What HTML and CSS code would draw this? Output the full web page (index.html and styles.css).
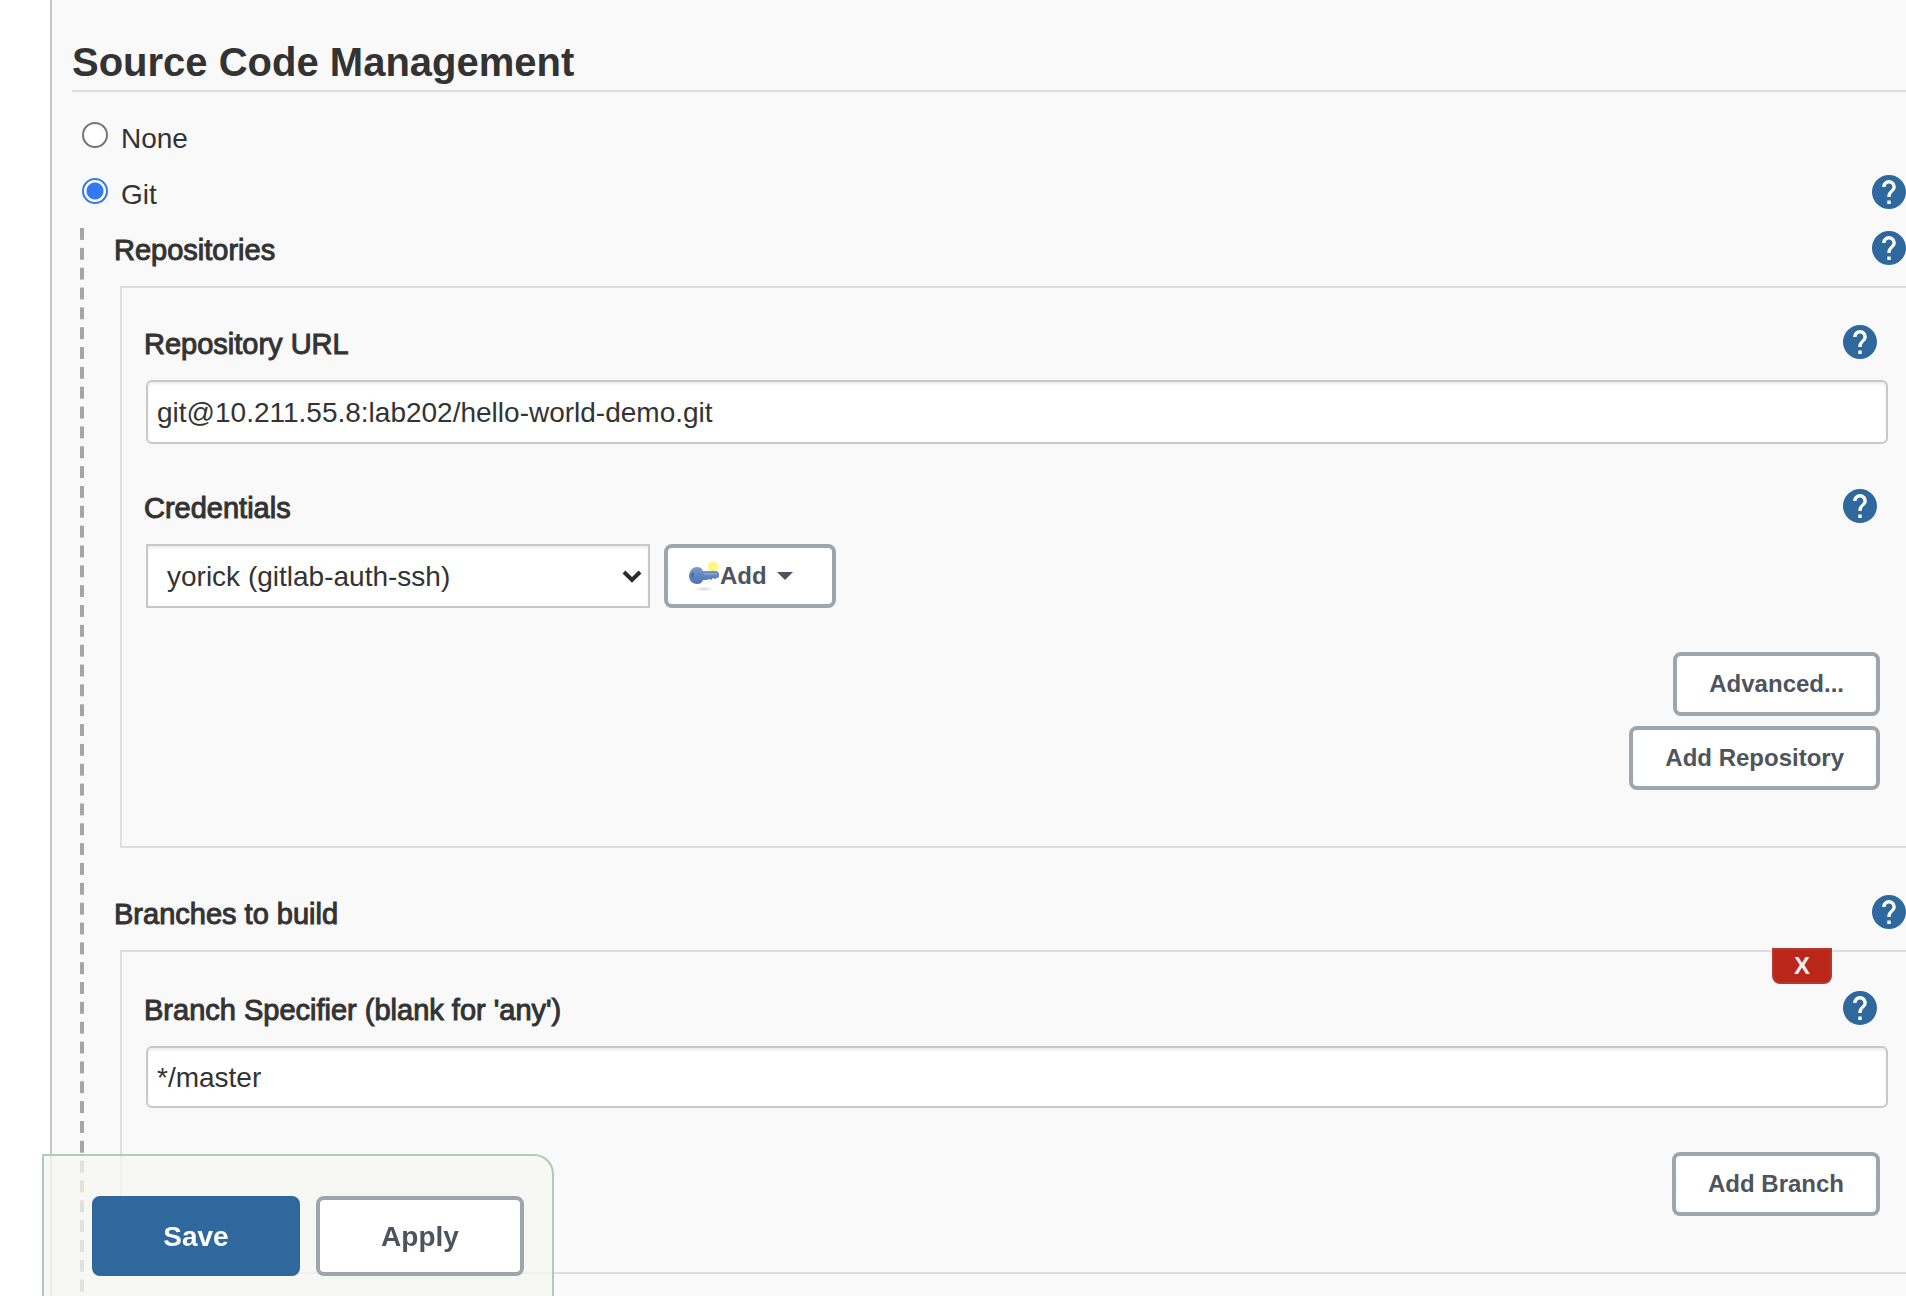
FILE: index.html
```html
<!DOCTYPE html>
<html lang="en">
<head>
<meta charset="utf-8">
<meta name="viewport" content="width=device-width, initial-scale=1">
<title>Source Code Management</title>
<link rel="stylesheet" href="styles.css">
</head>
<body>
<svg class="sprite" aria-hidden="true">
  <symbol id="help" viewBox="2 2 20 20">
    <circle cx="12" cy="12" r="9" fill="#fff"/>
    <path fill="#2e689d" d="M12 2C6.48 2 2 6.48 2 12s4.48 10 10 10 10-4.48 10-10S17.52 2 12 2zm1 17h-2v-2h2v2zm2.07-7.75l-.9.92C13.45 12.9 13 13.5 13 15h-2v-.5c0-1.1.45-2.1 1.17-2.83l1.24-1.26c.37-.36.59-.86.59-1.41 0-1.1-.9-2-2-2s-2 .9-2 2H8c0-2.21 1.79-4 4-4s4 1.79 4 4c0 .88-.36 1.68-.93 2.25z"/>
  </symbol>
</svg>
<form class="panel">
  <h1 class="title">Source Code Management</h1>

  <div class="row choice">
    <input class="radio" type="radio" name="scm" id="scm-none">
    <label class="choice-label" for="scm-none">None</label>
  </div>
  <div class="row choice">
    <input class="radio" type="radio" name="scm" id="scm-git" checked>
    <label class="choice-label" for="scm-git">Git</label>
    <a class="help" href="#help-git" aria-label="Help for Git"><svg><use href="#help"/></svg></a>
  </div>

  <div class="group">
    <div class="row">
      <h2 class="label">Repositories</h2>
      <a class="help" href="#help-repositories" aria-label="Help for Repositories"><svg><use href="#help"/></svg></a>
    </div>
    <section class="box">
      <div class="row">
        <label class="label" for="url">Repository URL</label>
        <a class="help" href="#help-url" aria-label="Help for Repository URL"><svg><use href="#help"/></svg></a>
      </div>
      <input class="text" type="text" id="url" value="git@10.211.55.8:lab202/hello-world-demo.git">

      <div class="row next">
        <label class="label" for="credentials">Credentials</label>
        <a class="help" href="#help-credentials" aria-label="Help for Credentials"><svg><use href="#help"/></svg></a>
      </div>
      <div class="credentials">
        <div class="select-wrap">
          <select class="select" id="credentials"><option>yorick (gitlab-auth-ssh)</option></select>
          <svg class="chevron" viewBox="0 0 20 14"><path d="M2 2l8 8 8-8" fill="none" stroke="#2b2b2b" stroke-width="4"/></svg>
        </div>
        <button class="button add" type="button">
          <svg class="key" viewBox="0 0 32 32">
            <defs>
              <radialGradient id="glow"><stop offset="0" stop-color="#fffbb0"/><stop offset=".45" stop-color="#fff26a"/><stop offset="1" stop-color="#fff26a" stop-opacity="0"/></radialGradient>
              <radialGradient id="shade"><stop offset="0" stop-color="#d0d0d0"/><stop offset="1" stop-color="#fff" stop-opacity="0"/></radialGradient>
              <linearGradient id="metal" x2="0" y2="1"><stop offset="0" stop-color="#7a9bd0"/><stop offset="1" stop-color="#4a72b3"/></linearGradient>
            </defs>
            <ellipse cx="16" cy="29" rx="14" ry="3" fill="url(#shade)"/>
            <circle cx="25" cy="7" r="7" fill="url(#glow)"/>
            <path fill="url(#metal)" d="M9 7c3 0 5 1 6 4h14l2 2v4l-4 2-2-1-2 2-2-1-2 1h-4c-1 3-3 4-6 4-5 0-8-4-8-8s3-9 8-9z"/>
            <path d="M5 12c1 1 1 4 0 6-2-1-2-5 0-6z" fill="#44639a"/>
            <path d="M16 14h13" stroke="#9ab2da" stroke-width="1"/>
          </svg>
          <span>Add</span>
          <svg class="caret" viewBox="0 0 16 8"><path d="M0 0h16L8 8z" fill="#4d545d"/></svg>
        </button>
      </div>
      <div class="actions">
        <button class="button" type="button">Advanced...</button>
        <button class="button" type="button">Add Repository</button>
      </div>
    </section>

    <div class="row section-next">
      <h2 class="label">Branches to build</h2>
      <a class="help" href="#help-branches" aria-label="Help for Branches to build"><svg><use href="#help"/></svg></a>
    </div>
    <section class="box branch">
      <button class="delete" type="button" aria-label="Delete branch">X</button>
      <div class="row">
        <label class="label" for="branch">Branch Specifier (blank for 'any')</label>
        <a class="help" href="#help-branch" aria-label="Help for Branch Specifier"><svg><use href="#help"/></svg></a>
      </div>
      <input class="text" type="text" id="branch" value="*/master">
      <div class="actions">
        <button class="button" type="button">Add Branch</button>
      </div>
    </section>
  </div>

  <div class="save-bar">
    <button class="button large primary" type="submit">Save</button>
    <button class="button large" type="button">Apply</button>
  </div>
</form>
</body>
</html>
```
FILE: styles.css
```css
* { box-sizing: border-box; }

html { scrollbar-width: none; }

body {
  margin: 0;
  background: #fff;
  color: #333;
  font: 28px/40px "Liberation Sans", Arial, sans-serif;
}

.sprite { display: none; }

.panel {
  min-height: 100vh;
  margin-left: 50px;
  padding: 38px 0 0 20px;
  border-left: 2px solid #c8c8c8;
  background: #f9f9f9;
}

.title {
  margin: 0 0 16px;
  padding-bottom: 4px;
  border-bottom: 2px solid #dedede;
  font-size: 40px;
  line-height: 48px;
}

.row {
  display: flex;
  align-items: center;
  height: 40px;
}

.choice {
  height: 56px;
  padding-left: 10px;
  gap: 13px;
}

.radio {
  appearance: none;
  width: 26px;
  height: 26px;
  margin: 0 0 2px;
  border: 2px solid #757575;
  border-radius: 50%;
  background: #fff;
}

.radio:checked {
  border-color: #3478f6;
  background: radial-gradient(circle, #3478f6 8px, #fff 9px);
}

.choice-label { padding-top: 6px; }

/* The stroke gives the regular face a medium weight. */
.label {
  margin: 0;
  padding-top: 4px;
  font-size: 29px;
  font-weight: normal;
  line-height: 36px;
  -webkit-text-stroke: 1px #333;
}

.help {
  width: 34px;
  height: 34px;
  margin-left: auto;
}

.help svg { display: block; width: 34px; height: 34px; }

/* The dashed rail marks the settings that belong to the chosen option. */
.group {
  margin: 8px 0 0 8px;
  padding: 0 0 26px 34px;
  background: linear-gradient(#a5a5a5 60%, transparent 60%) 0 0 / 4px 20px;
  background-repeat: no-repeat round;
}

.next { margin-top: 42px; }

.section-next { margin-top: 44px; }

.box {
  position: relative;
  margin: 18px 0 0 6px;
  padding: 34px 18px 56px 22px;
  border: 2px solid #dedede;
  border-right: 0;
}

.branch { padding-top: 36px; }

.box .row { padding-right: 11px; }

.text, .select {
  display: block;
  height: 64px;
  margin: 0;
  border: 2px solid #c8c8c8;
  background: #fff;
  box-shadow: inset 0 2px 3px rgba(0, 0, 0, .08);
  color: #333;
  font: inherit;
}

.text {
  width: calc(100% - 2px);
  margin: 18px 0 0 2px;
  padding: 2px 9px 0;
  border-radius: 6px;
}

.branch .text { height: 62px; }

.credentials {
  display: flex;
  gap: 14px;
  margin: 18px 0 0 2px;
}

.select-wrap { position: relative; }

.select {
  appearance: none;
  width: 504px;
  padding: 2px 40px 0 19px;
  border-radius: 0;
}

.chevron {
  position: absolute;
  top: 26px;
  right: 8px;
  width: 20px;
  height: 14px;
  pointer-events: none;
}

.button {
  height: 64px;
  padding: 0 32px;
  border: 4px solid #9ba6ae;
  border-radius: 8px;
  background: #fff;
  color: #4d545d;
  font: bold 24px/32px "Liberation Sans", Arial, sans-serif;
}

.add {
  display: flex;
  align-items: center;
  width: 172px;
  padding: 0 20px;
}

.key { width: 32px; height: 32px; }

.caret { width: 16px; height: 8px; margin-left: 10px; }

.actions {
  display: flex;
  flex-direction: column;
  align-items: flex-end;
  gap: 10px;
  margin-top: 44px;
  padding-right: 8px;
}

.delete {
  position: absolute;
  top: -4px;
  right: 74px;
  width: 60px;
  height: 36px;
  padding: 0;
  border: 2px solid #b03a2e;
  border-radius: 0 0 8px 8px;
  background: #bb261a;
  color: #f0f0f0;
  font: bold 24px/32px "Liberation Sans", Arial, sans-serif;
}

.save-bar {
  position: fixed;
  bottom: 0;
  left: 42px;
  display: flex;
  gap: 16px;
  padding: 40px 28px 20px 48px;
  border: 2px solid #b0cbbb;
  border-bottom: 0;
  border-top-right-radius: 20px;
  background: rgba(245, 247, 240, .74);
}

.large {
  width: 208px;
  height: 80px;
  padding-top: 2px;
  font-size: 28px;
}

.primary {
  border-color: #2e689d;
  background: #2e689d;
  color: #fff;
}
```
